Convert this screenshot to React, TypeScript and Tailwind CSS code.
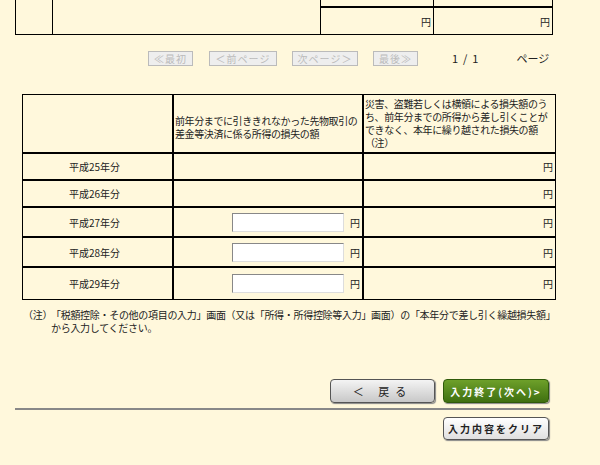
export default function App() {
  const f = { fontFamily: '"MS PGothic","Noto Sans CJK JP",sans-serif' };
  const pbtn = "h-[15px] border border-[#bbb] bg-[#eee] text-[#bbb] text-[10px] leading-[13px] text-center tracking-widest";
  const rows = [
    { y: "平成25年分", inp: false, h: "h-[27px]" },
    { y: "平成26年分", inp: false, h: "h-[27px]" },
    { y: "平成27年分", inp: true, h: "h-[30px]" },
    { y: "平成28年分", inp: true, h: "h-[30px]" },
    { y: "平成29年分", inp: true, h: "h-[31px]" },
  ];
  return (
    <div className="w-[600px] h-[465px] bg-[#fff8dc] text-[#222] text-[10px] relative overflow-hidden" style={f}>
      <div className="ml-[15px] w-[538px] h-[35px] border-x border-b border-black flex">
        <div className="w-[37px] border-r border-black" />
        <div className="w-[268px] border-r border-black" />
        <div className="w-[113px] border-r border-black flex flex-col">
          <div className="h-[8px] border-b-2 border-black" />
          <div className="flex-1 flex items-center justify-end pr-[2px]">円</div>
        </div>
        <div className="flex-1 flex flex-col">
          <div className="h-[8px] border-b-2 border-black" />
          <div className="flex-1 flex items-center justify-end pr-[2px]">円</div>
        </div>
      </div>
      <div className="flex items-center mt-[15px] h-[16px]">
        <div className={`${pbtn} ml-[148px] w-[45px]`}>≪最初</div>
        <div className={`${pbtn} ml-[16px] w-[68px] tracking-normal`}>＜前ページ</div>
        <div className={`${pbtn} ml-[15px] w-[66px] tracking-normal`}>次ページ＞</div>
        <div className={`${pbtn} ml-[15px] w-[45px]`}>最後≫</div>
        <div className="ml-[34px] text-[11px]">1&nbsp;&nbsp;/&nbsp;&nbsp;1</div>
        <div className="ml-[38px] text-[11px]">ページ</div>
      </div>
      <div className="ml-[22px] mt-[28px] w-[534px] border border-black">
        <div className="flex h-[59px] border-b-2 border-black">
          <div className="w-[151px] border-r-2 border-black" />
          <div className="w-[190px] border-r-2 border-black flex items-center pt-[6px] leading-[13px] text-[10px] tracking-[-0.4px] pl-[1px]">前年分までに引ききれなかった先物取引の差金等決済に係る所得の損失の額</div>
          <div className="flex-1 leading-[13px] text-[10px] tracking-[-0.4px] pt-[2px] pl-[1px]">災害、盗難若しくは横領による損失額のうち、前年分までの所得から差し引くことができなく、本年に繰り越された損失の額（注）</div>
        </div>
        {rows.map((r, i) => (
          <div key={r.y} className={`flex ${r.h} ${i < 4 ? "border-b-2 border-black" : ""}`}>
            <div className="w-[151px] border-r-2 border-black flex items-center pl-[46px]">{r.y}</div>
            <div className="w-[190px] border-r-2 border-black flex items-center justify-end pr-[2px]">
              {r.inp && (
                <>
                  <div className="w-[112px] h-[19px] bg-white border border-[#888] border-r-[#ddd] border-b-[#ddd]" />
                  <span className="ml-[6px]">円</span>
                </>
              )}
            </div>
            <div className="flex-1 flex items-center justify-end pr-[2px]">円</div>
          </div>
        ))}
      </div>
      <div className="ml-[23px] mt-[8px] flex leading-[13px] tracking-[-0.3px]">
        <div className="w-[28px] shrink-0">（注）</div>
        <div>「税額控除・その他の項目の入力」画面（又は「所得・所得控除等入力」画面）の「本年分で差し引く繰越損失額」<br />から入力してください。</div>
      </div>
      <div className="flex justify-end mr-[51px] mt-[45px] gap-[8px]">
        <div className="w-[105px] h-[24px] rounded-[4px] border border-[#555] bg-gradient-to-b from-[#f4f4f4] to-[#c8c8c8] flex items-center justify-center text-[11px] tracking-[6px] shadow-[1px_1px_1px_#888]">＜ 戻る</div>
        <div className="w-[106px] h-[24px] rounded-[4px] border border-[#2f5a0a] bg-gradient-to-b from-[#6ea02a] to-[#3f7010] flex items-center justify-center text-[10px] font-bold text-white tracking-[2px] shadow-[1px_1px_1px_#888]">入力終了(次へ)&gt;</div>
      </div>
      <div className="ml-[15px] mt-[5px] w-[535px] border-t-2 border-[#888]" />
      <div className="flex justify-end mr-[51px] mt-[7px]">
        <div className="w-[106px] h-[23px] rounded-[4px] border border-[#555] bg-gradient-to-b from-white to-[#e0e0e0] flex items-center justify-center text-[10px] font-bold tracking-[2px] shadow-[1px_1px_1px_#888]">入力内容をクリア</div>
      </div>
    </div>
  );
}
